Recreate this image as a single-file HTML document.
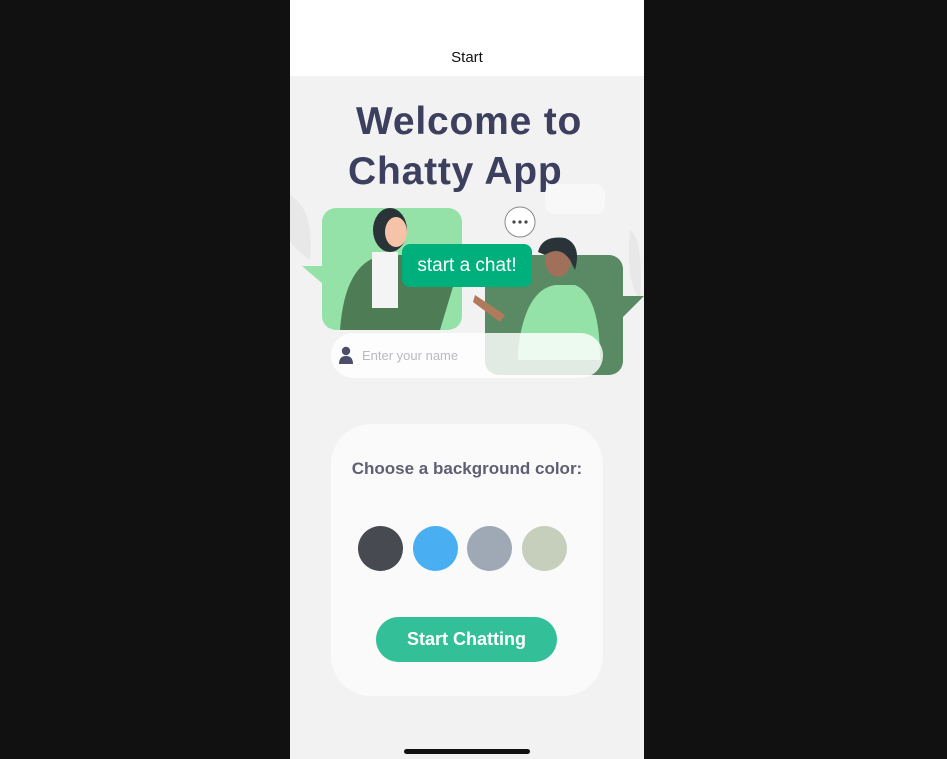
<!DOCTYPE html>
<html><head><meta charset="utf-8"><style>
body{margin:0;width:947px;height:759px;background:#111;position:relative;overflow:hidden;font-family:"Liberation Sans",sans-serif}
.ph{position:absolute;left:290px;top:0;width:354px;height:759px;background:#f2f2f2;overflow:hidden}
.hd{position:absolute;left:0;top:0;width:354px;height:76px;background:#fff;text-align:center}
.hd span{position:absolute;left:0;right:0;top:49px;font-size:15px;color:#111}
.t{position:absolute;font-weight:bold;font-size:39px;color:#3d3f5e;letter-spacing:0.8px}
.abs{position:absolute}
</style></head><body>
<div class="ph">
<div class="hd"><span>Start</span></div>
<div class="t" style="left:66px;top:100px">Welcome to</div>
<div class="t" style="left:58px;top:150px">Chatty App</div>
<svg class="abs" style="left:0;top:180px" width="354" height="210">
 <rect x="255" y="4" width="60" height="30" rx="10" fill="#f8f8f8"/>
 <path d="M0 15 Q25 30 20 80 Q5 70 0 60Z" fill="#e8e8e8"/>
 <path d="M340 50 Q354 60 350 120 Q335 100 340 50Z" fill="#e8e8e8"/>
 <path d="M12 86 L40 86 L40 110Z" fill="#94e2a8"/>
 <rect x="32" y="28" width="140" height="122" rx="14" fill="#94e2a8"/>
 <rect x="195" y="75" width="138" height="120" rx="14" fill="#5a8a64"/>
 <path d="M330 116 L354 116 L330 140Z" fill="#5a8a64"/>
 <path d="M50 150 Q55 80 95 75 L120 75 Q150 85 165 100 L150 150Z" fill="#4e7d55"/>
 <rect x="82" y="72" width="26" height="56" fill="#f4f4f4"/>
 <ellipse cx="100" cy="50" rx="17" ry="22" fill="#2a3438"/>
 <ellipse cx="106" cy="52" rx="11" ry="15" fill="#f5c3a7"/>
 <circle cx="230" cy="42" r="15" fill="#fff" stroke="#888"/>
 <circle cx="224" cy="42" r="1.6" fill="#444"/><circle cx="230" cy="42" r="1.6" fill="#444"/><circle cx="236" cy="42" r="1.6" fill="#444"/>
 <path d="M228 170 Q235 110 265 105 L285 105 Q310 115 310 180 L228 180Z" fill="#94e2a8"/>
 <path d="M185 115 L215 135 L210 142 L183 122Z" fill="#b07a5c"/>
 <ellipse cx="268" cy="80" rx="13" ry="17" fill="#a0705a"/>
 <path d="M248 72 Q252 55 275 58 Q292 65 285 90 L280 80 Q270 65 255 75Z" fill="#2a3438"/>
</svg>
<div class="abs" style="left:112px;top:244px;width:130px;height:43px;background:#00b07c;border-radius:8px;color:#fff;font-size:19px;line-height:43px;text-align:center">start a chat!</div>
<div class="abs" style="left:41px;top:333px;width:272px;height:45px;background:rgba(255,255,255,0.82);border-radius:23px"></div>
<svg class="abs" style="left:49px;top:346px" width="14" height="18"><circle cx="7" cy="5" r="4.2" fill="#4b4d6a"/><path d="M0 18 Q0 10 7 10 Q14 10 14 18Z" fill="#4b4d6a"/></svg>
<div class="abs" style="left:72px;top:348px;font-size:13px;color:#b9b9c0">Enter your name</div>
<div class="abs" style="left:41px;top:424px;width:272px;height:272px;background:#fafafa;border-radius:40px"></div>
<div class="abs" style="left:41px;top:459px;width:272px;text-align:center;font-size:17px;font-weight:bold;color:#5f5f74">Choose a background color:</div>
<div class="abs" style="left:68px;top:526px;width:45px;height:45px;border-radius:50%;background:#474a51"></div>
<div class="abs" style="left:123px;top:526px;width:45px;height:45px;border-radius:50%;background:#4aaff2"></div>
<div class="abs" style="left:177px;top:526px;width:45px;height:45px;border-radius:50%;background:#9fa9b6"></div>
<div class="abs" style="left:232px;top:526px;width:45px;height:45px;border-radius:50%;background:#c6cfbb"></div>
<div class="abs" style="left:86px;top:617px;width:181px;height:45px;border-radius:23px;background:#33c099;color:#fff;font-weight:bold;font-size:18px;line-height:45px;text-align:center">Start Chatting</div>
<div class="abs" style="left:114px;top:749px;width:126px;height:5px;border-radius:3px;background:#111"></div>
</div>
</body></html>
